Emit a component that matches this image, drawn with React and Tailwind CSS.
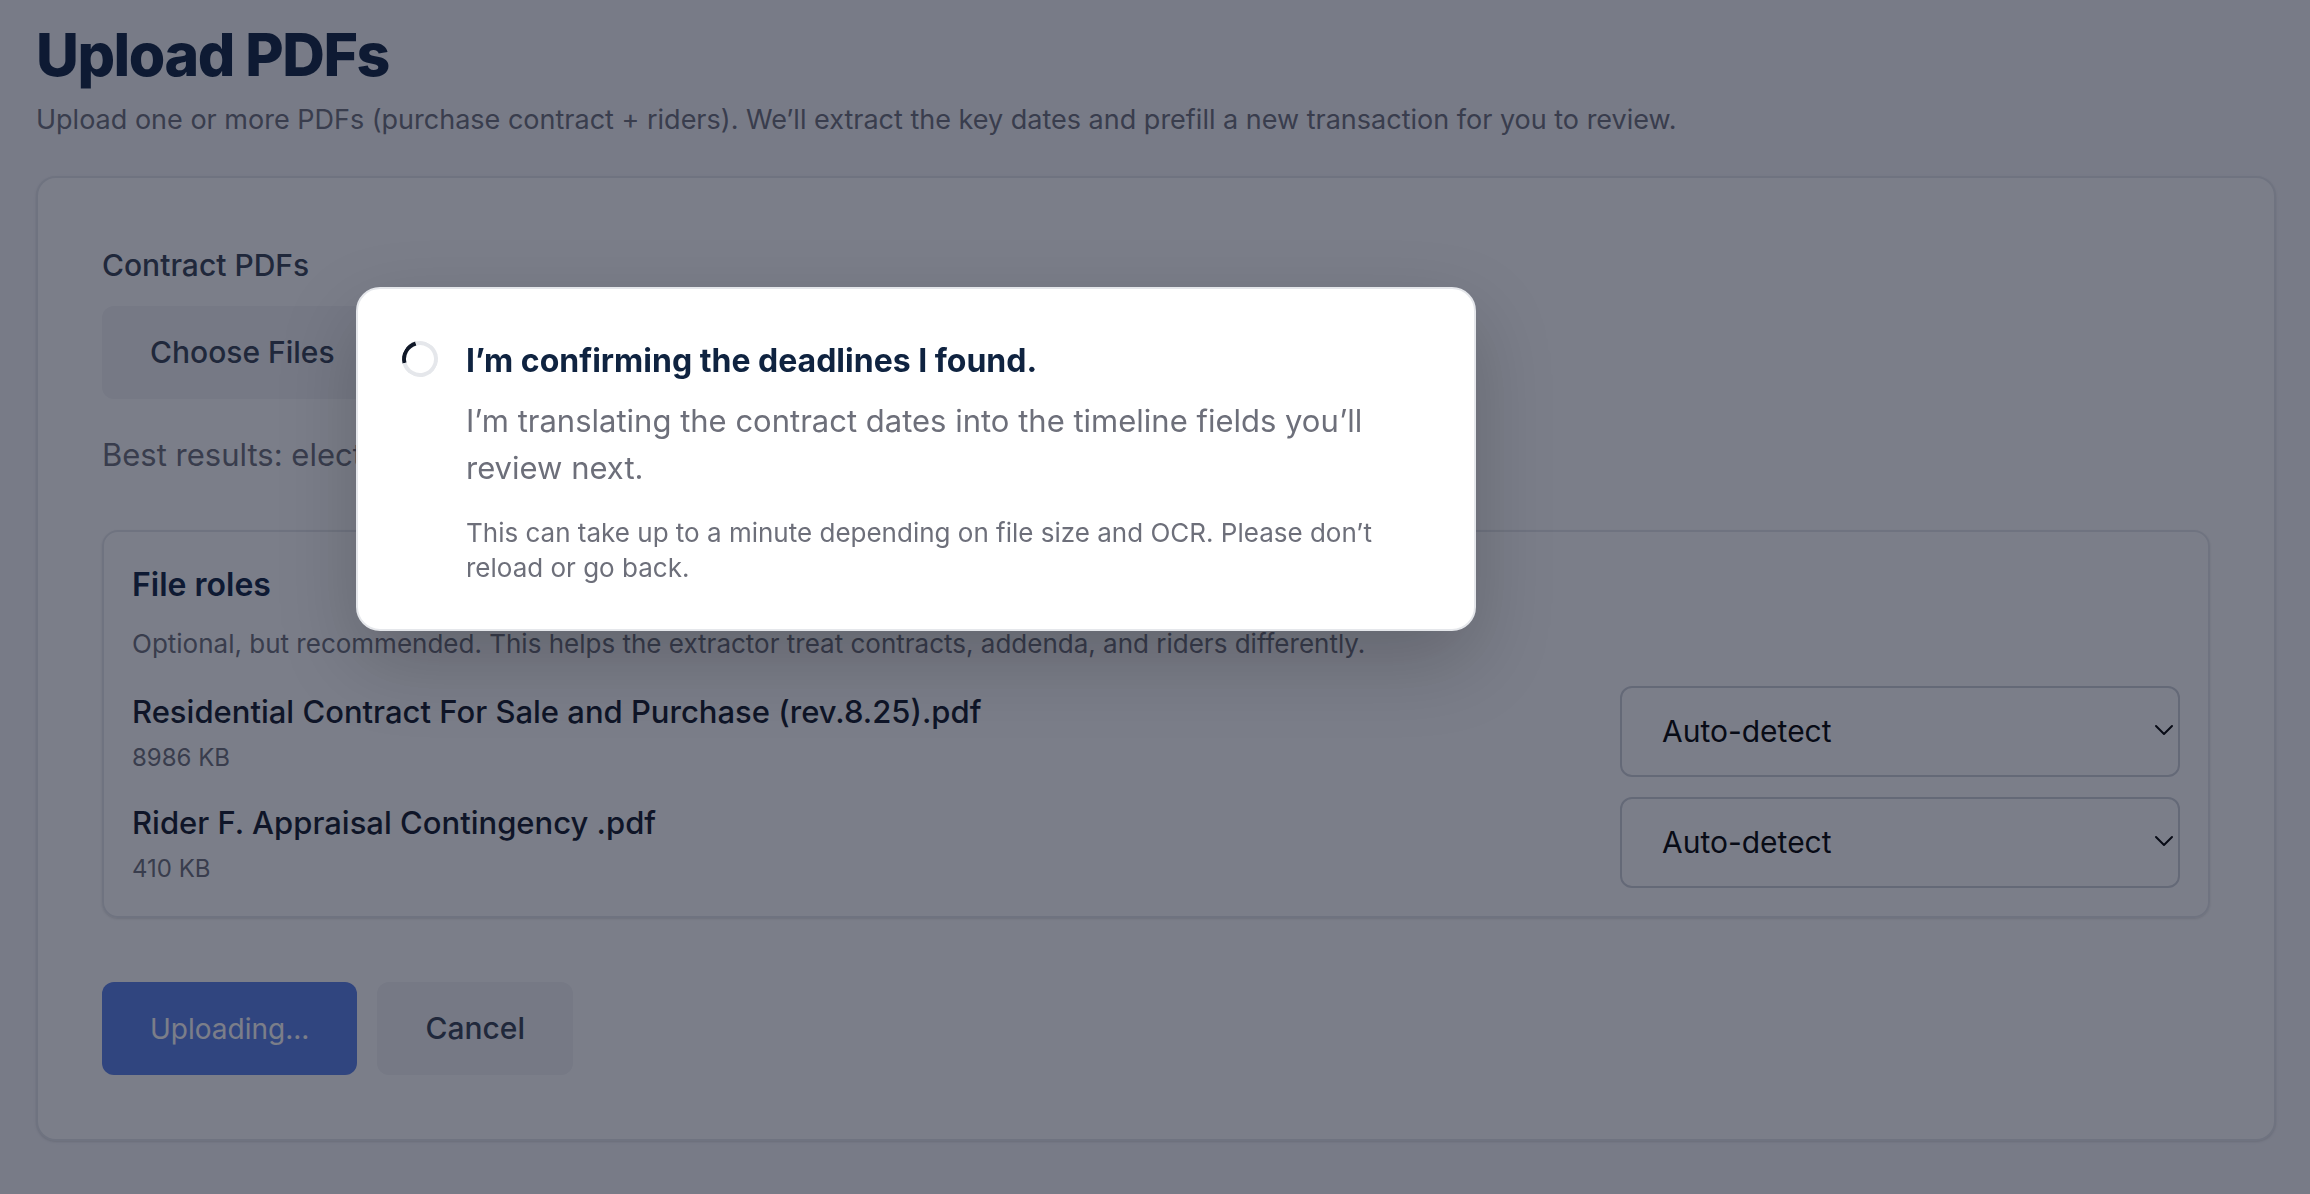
import React from 'react';
import { useState } from 'react';
import { ChevronDown } from 'lucide-react';

const initialFiles = [
  { name: 'Residential Contract For Sale and Purchase (rev.8.25).pdf', size: '8986 KB', role: 'auto' },
  { name: 'Rider F. Appraisal Contingency .pdf', size: '410 KB', role: 'auto' }
];

// One uploaded file with its role dropdown
function FileRow({ file, index, onChange }) {
  const id = `role-${index}`;

  return (
    <div className="flex items-center justify-between gap-8">
      <div className="min-w-0">
        <label htmlFor={id} className="block text-[31px] leading-12 font-medium text-gray-900">
          {file.name}
        </label>
        <p className="mt-1 text-[24px] leading-9 text-[#6d6f7a]">{file.size}</p>
      </div>
      <div className="relative w-[560px] shrink-0">
        <select
          id={id}
          value={file.role}
          onChange={(e) => onChange(index, e.target.value)}
          className="w-full h-[91px] pl-10 pr-12 appearance-none bg-white border-2 border-[#cdd0d8] rounded-xl text-[30px] text-black"
        >
          <option value="auto">Auto-detect</option>
          <option value="contract">Contract</option>
          <option value="addendum">Addendum</option>
          <option value="rider">Rider</option>
        </select>
        <ChevronDown
          className="absolute right-0 top-7 size-8 text-black pointer-events-none"
          strokeWidth={1.5}
        />
      </div>
    </div>
  );
}

// Blocks the page while the contract is being read
function ProgressDialog() {
  return (
    <div className="fixed inset-0 flex items-start bg-[#0f1428]/55 pt-[287px] pl-[356px] pr-8">
      <div
        role="dialog"
        aria-modal="true"
        aria-labelledby="progress-title"
        className="flex gap-7 w-full max-w-[1120px] px-11 pt-12 pb-11 bg-white border-2 border-gray-200 rounded-3xl shadow-[0_30px_80px_rgba(0,0,0,0.2)]"
      >
        <div className="mt-1 size-9 shrink-0 -rotate-60 rounded-full border-4 border-gray-200 border-t-gray-900" />
        <div>
          <h2 id="progress-title" className="text-[32px] leading-12 font-bold text-[#0f2340]">
            I’m confirming the deadlines I found.
          </h2>
          <p className="mt-3 text-[31px] leading-[47px] text-[#6d6f7a]">
            I’m translating the contract dates into the timeline fields you’ll review next.
          </p>
          <p className="mt-6 text-[26px] leading-[35px] text-[#6d6f7a]">
            This can take up to a minute depending on file size and OCR. Please don’t reload or go back.
          </p>
        </div>
      </div>
    </div>
  );
}

export default function App() {
  const [files, setFiles] = useState(initialFiles);

  // Update the role of a single file
  function handleRoleChange(index, role) {
    setFiles(files.map((f, i) => (i === index ? { ...f, role } : f)));
  }

  return (
    <div className="min-h-screen bg-[#f8f8fb] pl-9 pr-[34px] pt-5 pb-13 font-[Inter,sans-serif]">
      <h1 className="text-[59px] leading-[70px] font-extrabold tracking-tight text-[#0f2340]">Upload PDFs</h1>
      <p className="mt-[10px] text-[27px] leading-10 text-[#6d6f7a]">
        Upload one or more PDFs (purchase contract + riders). We’ll extract the key dates and prefill a new
        transaction for you to review.
      </p>

      <form className="mt-9 px-16 pt-16 pb-16 bg-white border-2 border-gray-200 rounded-[20px] shadow-sm">
        <label htmlFor="contract-pdfs" className="block text-[30px] leading-[46px] font-medium text-gray-700">
          Contract PDFs
        </label>
        <input
          id="contract-pdfs"
          type="file"
          accept="application/pdf"
          multiple
          className="block mt-[18px] w-72 text-[30px] text-transparent file:h-[93px] file:px-12 file:mr-6 file:rounded-xl file:bg-gray-100 file:font-medium file:text-gray-700"
        />
        <p className="mt-8 text-[31px] leading-12 text-[#6d6f7a]">Best results: electronic.</p>

        <section className="mt-[51px] p-7 border-2 border-gray-200 rounded-2xl shadow-sm">
          <h2 className="text-[32px] leading-[50px] font-semibold text-[#0f2340]">File roles</h2>
          <p className="mt-4 text-[26px] leading-9 text-[#6d6f7a]">
            Optional, but recommended. This helps the extractor treat contracts, addenda, and riders differently.
          </p>
          <div className="mt-6 flex flex-col gap-5">
            {files.map((file, i) => (
              <FileRow key={file.name} file={file} index={i} onChange={handleRoleChange} />
            ))}
          </div>
        </section>

        <div className="mt-16 flex gap-5">
          <button type="submit" disabled className="h-[93px] px-12 rounded-xl bg-[#5a80e8] text-[28px] text-white">
            Uploading...
          </button>
          <button type="button" className="h-[93px] px-12 rounded-xl bg-gray-100 text-[30px] font-medium text-gray-700">
            Cancel
          </button>
        </div>
      </form>

      <ProgressDialog />
    </div>
  );
}
